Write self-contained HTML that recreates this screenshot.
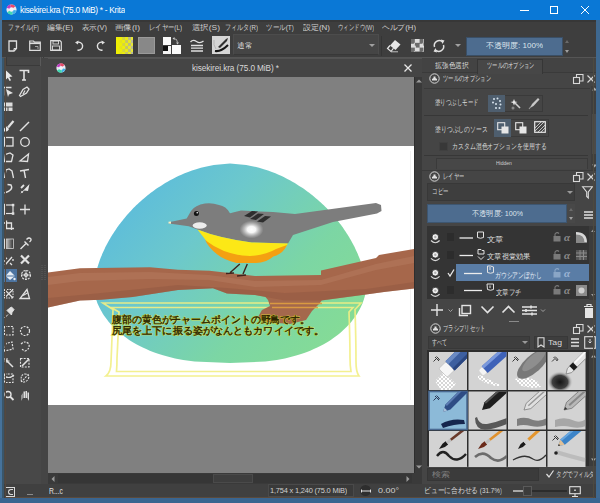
<!DOCTYPE html>
<html><head><meta charset="utf-8">
<style>
*{margin:0;padding:0;box-sizing:border-box}
html,body{width:600px;height:503px;overflow:hidden;background:#404040;font-family:"Liberation Sans",sans-serif;color:#d8d8d8;font-size:8px;line-height:1}
.a{position:absolute}
.t{position:absolute;white-space:nowrap;overflow:hidden;line-height:1}
svg{position:absolute;overflow:visible}
#title{left:0;top:0;width:600px;height:20px;background:#0a78d6;color:#fff}
#menu{left:0;top:20px;width:600px;height:16px;background:#3e3e3e;border-top:2px solid #373737}
#menu .t{top:2px;font-size:8px;color:#d0d0d0}
#toolbar{left:0;top:36px;width:600px;height:22px;background:#3e3e3e;border-bottom:1px solid #555}
#toolbox{left:2px;top:58px;width:46px;height:426px;background:#484848}
#tabbar{left:48px;top:58px;width:374px;height:19px;background:#454545;border-top:1px solid #535353}
#canvas{left:48px;top:77px;width:366px;height:396px;background:#808080;overflow:hidden}
#vscroll{left:414px;top:77px;width:8px;height:396px;background:#3a3a3a;border-left:1px solid #2e2e2e}
#hscroll{left:48px;top:473px;width:374px;height:11px;background:#3a3a3a}
#status{left:2px;top:484px;width:595px;height:13px;background:#404040}
#right{left:422px;top:58px;width:175px;height:426px;background:#454545}
#bl{left:0;top:0;width:2px;height:503px;background:#46729a}
#br{left:596px;top:20px;width:4px;height:483px;background:#3e6890}
#bb{left:0;top:498px;width:600px;height:5px;background:#3a6590}
</style></head><body>
<!-- title bar -->
<div class="a" id="title">
  <svg style="left:6px;top:4px" width="11" height="11" viewBox="0 0 10 10">
    <circle cx="5" cy="5" r="4.6" fill="#e8e8f0"/>
    <path d="M5 5L0.6 3.5A4.6 4.6 0 0 1 4 0.5Z" fill="#c03cc0"/>
    <path d="M5 5L4 0.5A4.6 4.6 0 0 1 8.5 2Z" fill="#e84a6a"/>
    <path d="M5 5L9.5 6A4.6 4.6 0 0 1 6 9.5Z" fill="#40b0e8"/>
    <path d="M5 5L6 9.5A4.6 4.6 0 0 1 1 7.5Z" fill="#40d8b0"/>
    <circle cx="5" cy="5" r="2" fill="#f4f4f8"/>
  </svg>
  <div class="t" style="left:20px;top:6px;font-size:9px;color:#fff;letter-spacing:-0.35px;transform-origin:0 0;transform:scaleX(0.882);--w:105px">kisekirei.kra (75.0 MiB) * - Krita</div>
  <div class="a" style="left:520px;top:10px;width:9px;height:1px;background:#fff"></div>
  <div class="a" style="left:550px;top:6px;width:8px;height:8px;border:1px solid #fff"></div>
  <svg style="left:581px;top:6px" width="8" height="8" viewBox="0 0 8 8"><path d="M0 0L8 8M8 0L0 8" stroke="#fff" stroke-width="1"/></svg>
</div>
<!-- menu -->
<div class="a" id="menu">
  <div class="t" style="left:8px;transform-origin:0 0;transform:scaleX(0.886);--w:31px">ファイル(F)</div>
  <div class="t" style="left:47px;transform-origin:0 0;transform:scaleX(1.130);--w:26px">編集(E)</div>
  <div class="t" style="left:82px;transform-origin:0 0;transform:scaleX(1.087);--w:25px">表示(V)</div>
  <div class="t" style="left:115px;transform-origin:0 0;transform:scaleX(1.250);--w:25px">画像(I)</div>
  <div class="t" style="left:149px;transform-origin:0 0;transform:scaleX(0.971);--w:33px">レイヤー(L)</div>
  <div class="t" style="left:192px;transform-origin:0 0;transform:scaleX(1.217);--w:28px">選択(S)</div>
  <div class="t" style="left:225px;transform-origin:0 0;transform:scaleX(0.917);--w:33px">フィルタ(R)</div>
  <div class="t" style="left:266px;transform-origin:0 0;transform:scaleX(0.966);--w:28px">ツール(T)</div>
  <div class="t" style="left:303px;transform-origin:0 0;transform:scaleX(1.125);--w:27px">設定(N)</div>
  <div class="t" style="left:338px;transform-origin:0 0;transform:scaleX(0.818);--w:36px">ウィンドウ(W)</div>
  <div class="t" style="left:382px;transform-origin:0 0;transform:scaleX(1.133);--w:34px">ヘルプ(H)</div>
</div>
<!-- toolbar -->
<div class="a" id="toolbar">
  <!-- new -->
  <svg style="left:8px;top:4px" width="10" height="12" viewBox="0 0 10 12"><path d="M1 1H8.5V8.5L6 11H1Z" fill="none" stroke="#e0e0e0" stroke-width="1.3"/><path d="M8.5 8.5H6V11" fill="none" stroke="#e0e0e0" stroke-width="1"/></svg>
  <!-- folder -->
  <svg style="left:29px;top:4px" width="12" height="11" viewBox="0 0 12 11"><path d="M0.7 1H4.5L5.5 2.2H11.3V10.3H0.7Z" fill="none" stroke="#dcdcdc" stroke-width="1.2"/><rect x="0.7" y="2.5" width="10.6" height="1.6" fill="#dcdcdc"/><path d="M6 6.5H9V9" fill="none" stroke="#bbb" stroke-width="0.8"/></svg>
  <!-- save -->
  <svg style="left:50px;top:4px" width="12" height="11" viewBox="0 0 12 11"><path d="M0.7 0.7H10L11.3 2V10.3H0.7Z" fill="none" stroke="#dcdcdc" stroke-width="1.2"/><rect x="3" y="1" width="5.5" height="3" fill="none" stroke="#dcdcdc" stroke-width="0.9"/><rect x="2.5" y="6" width="7" height="4" fill="none" stroke="#dcdcdc" stroke-width="0.9"/></svg>
  <!-- undo -->
  <svg style="left:74px;top:4px" width="11" height="12" viewBox="0 0 11 12"><path d="M3 2.5A4 4 0 1 1 3.5 10" fill="none" stroke="#e0e0e0" stroke-width="1.4"/><path d="M1 2.5L4.5 0.5L4 4.5Z" fill="#e0e0e0"/></svg>
  <!-- redo -->
  <svg style="left:95px;top:4px" width="11" height="12" viewBox="0 0 11 12"><path d="M8 2.5A4 4 0 1 0 7.5 10" fill="none" stroke="#e0e0e0" stroke-width="1.4"/><path d="M10 2.5L6.5 0.5L7 4.5Z" fill="#e0e0e0"/></svg>
  <!-- yellow gradient -->
  <div class="a" style="left:116px;top:1px;width:17px;height:17px;background:repeating-conic-gradient(#e8e820 0 25%,#b0b098 0 50%) 0 0/6px 6px"></div>
  <div class="a" style="left:116px;top:1px;width:17px;height:17px;background:linear-gradient(90deg,#f2f200 0%,rgba(240,240,0,0.85) 25%,rgba(240,240,0,0.25) 70%,rgba(220,220,180,0.2) 100%)"></div>
  <!-- gray -->
  <div class="a" style="left:138px;top:1px;width:17px;height:17px;background:#888;border:1px solid #9a9a9a"></div>
  <!-- bw -->
  <div class="a" style="left:163px;top:1px;width:8px;height:8px;background:#fafafa"></div>
  <div class="a" style="left:163px;top:10px;width:8px;height:8px;background:#f4f4f4"></div><div class="a" style="left:163px;top:10px;width:5px;height:5px;background:#101010"></div>
  <div class="a" style="left:172px;top:9px;width:9px;height:9px;background:#fafafa"></div>
  <svg style="left:172px;top:1px" width="7" height="8" viewBox="0 0 7 8"><path d="M1.5 1.5Q5.5 1.5 5.5 5.5" fill="none" stroke="#c8c8c8" stroke-width="0.8"/><path d="M0.5 1.5L2.5 0V3Z M4 5.5H7L5.5 7.5Z" fill="#c8c8c8"/></svg>
  <!-- lines -->
  <svg style="left:190px;top:3px" width="14" height="14" viewBox="0 0 14 14"><path d="M0.5 3Q3 0 6.5 2.5T13.5 2" fill="none" stroke="#e0e0e0" stroke-width="1.3"/><path d="M1 6.5H13M1 9.2H13M1 12H13" stroke="#e0e0e0" stroke-width="1.3"/></svg>
  <!-- brush preset -->
  <div class="a" style="left:212px;top:0px;width:18px;height:18px;background:#d6d6d6"></div>
  <svg style="left:212px;top:0px" width="18" height="18" viewBox="0 0 18 18"><path d="M3 15Q9 16 16 9" fill="none" stroke="#151515" stroke-width="2"/><path d="M6 11L14 3L16 2L15 5L8 12Z" fill="#303030"/><path d="M2 4Q1 9 4 13" fill="none" stroke="#aaa" stroke-width="0.8"/></svg>
  <!-- combo -->
  <div class="a" style="left:233px;top:-2px;width:146px;height:21px;background:#454545;border:1px solid #4c4c4c;border-bottom-color:#383838"></div>
  <div class="t" style="left:237px;top:6px;font-size:8px;color:#dcdcdc;transform-origin:0 0;transform:scaleX(1.250);--w:15px">通常</div>
  <svg style="left:369px;top:8px" width="6" height="4" viewBox="0 0 6 4"><path d="M0 0H6L3 3Z" fill="#a0a0a0"/></svg>
  <div class="a" style="left:381px;top:0;width:1px;height:20px;background:#353535"></div>
  <!-- eraser -->
  <svg style="left:386px;top:3px" width="16" height="14" viewBox="0 0 16 14"><path d="M9 1L14.5 5.5L9.5 11L4 6.5Z" fill="#e6e6e6"/><path d="M4 6.5L1.5 9.5L5 12.5L7.5 9.2" fill="none" stroke="#e6e6e6" stroke-width="1.2"/><path d="M5 12.8H12" stroke="#cfcfcf" stroke-width="0.9"/></svg>
  <!-- pattern -->
  <div class="a" style="left:411px;top:3px;width:13px;height:13px;background:repeating-conic-gradient(#f0f0f0 0 25%,#707070 0 50%) 0 0/8.6px 8.6px;opacity:.9"></div>
  <!-- reload -->
  <svg style="left:432px;top:3px" width="14" height="14" viewBox="0 0 14 14"><path d="M2.5 8A5 5 0 0 1 10.5 2.8" fill="none" stroke="#e0e0e0" stroke-width="1.5"/><path d="M11.5 6A5 5 0 0 1 3.5 11.2" fill="none" stroke="#e0e0e0" stroke-width="1.5"/><path d="M9 0.5L12.5 1.5L10.5 5Z M5 13.5L1.5 12.5L3.5 9Z" fill="#e0e0e0"/></svg>
  <svg style="left:455px;top:8px" width="6" height="4" viewBox="0 0 6 4"><path d="M0 0H6L3 3Z" fill="#a0a0a0"/></svg>
  <!-- opacity slider -->
  <div class="a" style="left:466px;top:1px;width:97px;height:19px;background:#4d6c8f;border:1px solid #3a4f66"></div>
  <div class="t" style="left:486px;top:6px;font-size:8px;color:#dde4ec;transform-origin:0 0;transform:scaleX(1.213);--w:57px">不透明度: 100%</div>
  <svg style="left:564px;top:2px" width="6" height="17" viewBox="0 0 6 17"><path d="M1 5L3 2L5 5Z" fill="#6a6a6a"/><path d="M1 12H5L3 15Z" fill="#a0a0a0"/></svg>
</div>
<div class="a" id="toolbox">
  <div class="a" style="left:4px;top:-1px;width:38px;height:9px;border:1px solid #3a3a3a;border-top:none;background:#464646"></div>
  <div class="a" style="left:38px;top:-1px;width:1px;height:9px;background:#5a5a5a"></div><div class="a" style="left:40px;top:-1px;width:1px;height:9px;background:#5a5a5a"></div>
  <div class="a" style="left:39px;top:0;width:7px;height:426px;background:#454545"></div>
  <svg style="left:-1.5px;top:0" width="40" height="410" viewBox="0 0 40 410" fill="none" stroke="#e2e2e2" stroke-width="1.2">
    <!-- row1 y~75 => local 17 -->
    <path d="M4.5 12V22L6.8 19.8L8.6 23L10 22.3L8.3 19L11.5 18.6Z" fill="#e8e8e8" stroke="none"/>
    <path d="M18.5 12.5H27.5V15M23 12.5V22M21 22H25" stroke-width="1.6"/>
    <!-- row2 y~91 => 33 -->
    <path d="M2.5 37.5V29.5H10.5" stroke-width="1.4"/><path d="M5 31L12 35L8 36.5L7 39Z" fill="#e2e2e2" stroke="none"/>
    <path d="M18.5 37.5L22 31.5L26 29L28 31L25.5 35L19.5 38.5Z" stroke-width="1.3"/><path d="M22 36L24 32.5"/>
    <!-- row3 y~107 => 49 -->
    <rect x="2.5" y="44.5" width="9" height="4" fill="#dcdcdc" stroke="none"/><rect x="2.5" y="49.5" width="4" height="3.5" fill="#dcdcdc" stroke="none"/><rect x="7.5" y="49.5" width="4" height="3.5" fill="#dcdcdc" stroke="none"/>
    <!-- row4 brush/line y~126 => 68 -->
    <path d="M2.5 73.5Q2.5 69.5 5.5 68.5L8 71Q7 74 2.5 73.5Z" fill="#e8e8e8" stroke="none"/><path d="M7 69.5L12.5 63" stroke-width="2.2"/>
    <path d="M19 73L28 64" stroke-width="1.4"/>
    <!-- row5 rect/ellipse y~142 => 84 -->
    <rect x="3.5" y="79.5" width="8.5" height="8.5" stroke-width="1.3"/>
    <circle cx="24" cy="84" r="4.3" stroke-width="1.3"/>
    <!-- row6 polygon / polyline y~157 => 99 -->
    <path d="M3.5 103.5L4.5 96.5L9 95L12 97L10.5 103.5Z" stroke-width="1.3"/>
    <path d="M19 103L27.5 96L26.5 103.5Z" stroke-width="1.3"/>
    <!-- row7 bezier y~173 => 115 -->
    <path d="M3.5 120L5 112L8 111L11 113L12.5 120" stroke-width="1.3"/>
    <path d="M19 113L28 111.5M23 112L24.5 120" stroke-width="1.4"/>
    <!-- row8 freehand path y~189 => 131 -->
    <path d="M3.5 135Q13 132 10 127L6.5 126.5" stroke-width="1.4"/>
    <path d="M19 136L28.5 126L27 133L23.5 132.5Z" fill="#e6e6e6" stroke="none"/><path d="M20 130L23 127" stroke-width="1.8"/><circle cx="21" cy="134" r="1" fill="#e0e0e0" stroke="none"/>
    <!-- row9 transform/move y~209 => 151 -->
    <rect x="3.5" y="147" width="8.5" height="8.5" stroke-width="1.2"/><rect x="2.2" y="145.8" width="2.5" height="2.5" fill="#e0e0e0" stroke="none"/><rect x="10.8" y="145.8" width="2.5" height="2.5" fill="#e0e0e0" stroke="none"/><rect x="2.2" y="154.3" width="2.5" height="2.5" fill="#e0e0e0" stroke="none"/><rect x="10.8" y="154.3" width="2.5" height="2.5" fill="#e0e0e0" stroke="none"/>
    <path d="M24 146.5V156.5M19 151.5H29" stroke-width="1.3"/>
    <!-- row10 crop y~225 => 167 -->
    <path d="M5.5 162.5V170.5H13M3 165H10.5V172" stroke-width="1.3"/>
    <!-- row11 gradient / picker y~244 => 186 -->
    <rect x="3" y="181" width="9.5" height="9.5" fill="url(#gr)" stroke="#d0d0d0" stroke-width="0.8"/>
    <path d="M19.5 191L25 185.5M23.5 183.5L27.5 187.5M25.5 181.5Q28 179 29.5 180.5T28.5 184" stroke-width="1.4"/>
    <!-- row12 smart patch / multibrush y~260 => 202 -->
    <path d="M4 207L11 199M4.5 199.5L6 201M9 205L11 207" stroke-width="1.3"/><circle cx="4" cy="203" r="0.9" fill="#e0e0e0" stroke="none"/><circle cx="12" cy="202" r="0.9" fill="#e0e0e0" stroke="none"/>
    <path d="M20 197.5L28 205.5M28 197.5L20 205.5" stroke-width="2.2"/>
    <!-- row14 assistant y~294 => 236 -->
    <rect x="3.5" y="231.5" width="8.5" height="8.5" stroke-width="1" stroke-dasharray="1.5 1"/><path d="M3.5 231.5L12 240M12 231.5L3.5 240" stroke-width="1.2"/>
    <path d="M19 240.5H28.5L26 231.5Z" stroke-width="1.3"/><path d="M22 237.5L26.5 235"/>
    <!-- row15 pin y~312 => 254 -->
    <path d="M3.5 260L7 256.5M6 252.5L10.5 257L11 254.5L13 251.5L10.5 249L7.5 251Z" fill="#e0e0e0" stroke-width="1"/>
    <!-- row16 rect sel / ellipse sel y~331 => 273 -->
    <rect x="3.5" y="268.5" width="8.5" height="8.5" stroke-width="1.2" stroke-dasharray="2 1.2"/>
    <circle cx="24" cy="273" r="4.5" stroke-width="1.2" stroke-dasharray="2 1.2"/>
    <!-- row17 polygon sel / freehand sel y~347 => 289 -->
    <path d="M3.5 293L5 285.5L11 284L12 291Z" stroke-width="1.2" stroke-dasharray="2 1.2"/>
    <path d="M20 286Q24 282 28 286Q29 291 24 293L20.5 291" stroke-width="1.2" stroke-dasharray="2 1.2"/>
    <!-- row18 wand / similar y~363 => 305 -->
    <path d="M3.5 300.5L12 309" stroke-width="1.5"/><path d="M6 300V305M3.5 303H8.5" stroke-width="1"/>
    <rect x="19.5" y="300.5" width="8.5" height="8.5" stroke-width="1.1" stroke-dasharray="2 1.2"/><path d="M21 308L28 301" stroke-width="1.6"/>
    <!-- row19 bezier sel / magnetic y~378 => 320 -->
    <rect x="3.5" y="316" width="8.5" height="8.5" stroke-width="1.1" stroke-dasharray="2 1.2"/><path d="M2.5 317Q7.5 322 13 317" stroke-width="1.1"/>
    <path d="M20.5 324Q19 316 24 316Q29 316 27.5 320.5Q26 324 21 324.5M27.5 316L20.5 324" stroke-width="1.1" stroke-dasharray="2 1.1"/>
    <!-- row20 zoom / pan y~397 => 339 -->
    <circle cx="7" cy="336.5" r="3" stroke-width="1.4"/><path d="M9 338.5L12.5 342" stroke-width="1.8"/>
    <path d="M20.5 343V337.5L21.5 335V340M22.5 340V333.5H24V340M24.5 340V333H26V340M26.5 340V334.5H28V340V343Z" fill="#e0e0e0" stroke="none"/>
    <defs><linearGradient id="gr" x1="0" x2="1"><stop offset="0" stop-color="#f0f0f0"/><stop offset="1" stop-color="#303030"/></linearGradient></defs>
  </svg>
  <svg style="left:38px;top:206px" width="8" height="18" viewBox="0 0 8 18"><path d="M2 1V16M5 1V16" stroke="#5e5e5e" stroke-width="1" stroke-dasharray="1 1"/></svg>
  <!-- selected fill tool -->
  <div class="a" style="left:1px;top:211px;width:14px;height:13px;background:#4d74a0"></div>
  <svg style="left:0.5px;top:211px" width="14" height="13" viewBox="0 0 14 13"><path d="M7 2L12 7L7 11L2.5 7Z" fill="#e8eef5"/><path d="M2 7H12" stroke="#4d74a0" stroke-width="1"/><circle cx="11.5" cy="10" r="1.2" fill="#e8eef5"/></svg>
  <!-- paint-fill row col2: ruler/measure icon -->
  <svg style="left:16.5px;top:210px" width="14" height="14" viewBox="0 0 14 14" fill="none" stroke="#e2e2e2" stroke-width="1.1"><circle cx="7" cy="7" r="4.5" stroke-dasharray="2 1"/><path d="M2 7H12M7 2V12" stroke-width="0.9"/><circle cx="7" cy="7" r="1.5"/></svg>
</div>
<div class="a" id="tabbar">
  <svg style="left:8px;top:4px" width="10" height="10" viewBox="0 0 10 10">
    <circle cx="5" cy="5" r="4.6" fill="#e8e8f0"/>
    <path d="M5 5L0.6 3.5A4.6 4.6 0 0 1 4 0.5Z" fill="#c03cc0"/>
    <path d="M5 5L4 0.5A4.6 4.6 0 0 1 8.5 2Z" fill="#e84a6a"/>
    <path d="M5 5L9.5 6A4.6 4.6 0 0 1 6 9.5Z" fill="#40b0e8"/>
    <path d="M5 5L6 9.5A4.6 4.6 0 0 1 1 7.5Z" fill="#40d8b0"/>
    <circle cx="5" cy="5" r="2" fill="#f4f4f8"/>
  </svg>
  <div class="t" style="left:144px;top:5px;font-size:8.5px;color:#d8d8d8;letter-spacing:-0.1px;transform-origin:0 0;transform:scaleX(0.866);--w:87px">kisekirei.kra (75.0 MiB) *</div>
  <svg style="left:356px;top:5px" width="8" height="8" viewBox="0 0 8 8"><path d="M0.5 0.5L7.5 7.5M7.5 0.5L0.5 7.5" stroke="#e8e8e8" stroke-width="1.3"/></svg>
</div>
<div class="a" id="canvas">
  <svg style="left:0;top:0" width="366" height="396" viewBox="48 77 366 396">
    <defs>
      <linearGradient id="dome" x1="0.02" y1="0.2" x2="0.98" y2="0.85">
        <stop offset="0" stop-color="#5abade"/>
        <stop offset="0.33" stop-color="#6cc8cc"/>
        <stop offset="0.68" stop-color="#7cd6a4"/>
        <stop offset="1" stop-color="#86dc94"/>
      </linearGradient>
      <radialGradient id="spot"><stop offset="0" stop-color="#fff"/><stop offset="0.35" stop-color="#f6f6f6"/><stop offset="1" stop-color="#d0d0d0" stop-opacity="0"/></radialGradient>
    </defs>
    <rect x="48" y="146" width="366" height="259" fill="#fff"/>
    <path d="M410.5 151V400" stroke="#f2f2f2" stroke-width="1"/>
    <path d="M230.0 163.6 213.8 165.0 206.6 166.4 200.9 167.8 196.2 169.2 192.0 170.6 188.1 171.9 184.6 173.3 181.4 174.7 178.3 176.1 175.4 177.5 172.7 178.9 170.1 180.3 167.6 181.7 165.2 183.1 163.0 184.5 160.8 185.9 158.6 187.3 156.6 188.6 154.6 190.0 152.7 191.4 150.8 192.8 149.0 194.2 147.3 195.6 145.6 197.0 143.9 198.4 142.3 199.8 140.7 201.2 139.2 202.6 137.7 204.0 136.2 205.3 134.8 206.7 133.4 208.1 132.1 209.5 130.8 210.9 129.5 212.3 128.2 213.7 127.0 215.1 125.8 216.5 124.6 217.9 123.5 219.3 122.4 220.7 121.3 222.0 120.2 223.4 119.1 224.8 118.1 226.2 117.1 227.6 116.2 229.0 115.2 230.4 114.3 231.8 113.4 233.2 112.5 234.6 111.6 236.0 110.8 237.3 110.0 238.7 109.2 240.1 108.4 241.5 107.6 242.9 106.9 244.3 106.1 245.7 105.4 247.1 104.8 248.5 104.1 249.9 103.5 251.3 102.8 252.7 102.2 254.0 101.7 255.4 101.1 256.8 100.5 258.2 100.0 259.6 99.5 261.0 99.0 262.4 98.6 263.8 98.1 265.2 97.7 266.6 97.3 268.0 96.9 269.4 96.5 270.7 96.2 272.1 95.8 273.5 95.5 274.9 95.3 276.3 95.0 277.7 94.8 279.1 94.6 280.5 94.4 281.9 94.2 283.3 94.1 284.7 94.0 286.1 94.0 287.4 94.1 289.0 94.2 290.5 94.4 292.1 94.6 293.6 95.0 295.2 95.3 296.7 95.8 298.2 96.2 299.8 96.8 301.3 97.3 302.9 98.0 304.4 98.7 305.9 99.4 307.5 100.2 309.0 101.0 310.6 101.9 312.1 102.8 313.7 103.8 315.2 104.9 316.7 106.0 318.3 107.2 319.8 108.4 321.4 109.7 322.9 111.1 324.5 112.5 326.0 114.0 327.5 115.6 329.1 117.2 330.6 119.0 332.2 120.8 333.7 122.7 335.2 124.8 336.8 126.9 338.3 129.2 339.9 131.6 341.4 134.1 343.0 136.8 344.5 139.7 346.0 142.8 347.6 146.2 349.1 149.8 350.7 153.7 352.2 158.1 353.7 163.0 355.3 168.5 356.8 175.1 358.4 183.2 359.9 194.6 361.5 230.0 363.0 230.0 363.0 265.4 361.5 276.8 359.9 284.9 358.4 291.5 356.8 297.0 355.3 301.9 353.7 306.3 352.2 310.2 350.7 313.8 349.1 317.2 347.6 320.3 346.0 323.2 344.5 325.9 343.0 328.4 341.4 330.8 339.9 333.1 338.3 335.2 336.8 337.3 335.2 339.2 333.7 341.0 332.2 342.8 330.6 344.4 329.1 346.0 327.5 347.5 326.0 348.9 324.5 350.3 322.9 351.6 321.4 352.8 319.8 354.0 318.3 355.1 316.7 356.2 315.2 357.2 313.7 358.1 312.1 359.0 310.6 359.8 309.0 360.6 307.5 361.3 305.9 362.0 304.4 362.7 302.9 363.2 301.3 363.8 299.8 364.2 298.2 364.7 296.7 365.0 295.2 365.4 293.6 365.6 292.1 365.8 290.5 365.9 289.0 366.0 287.4 366.0 286.1 365.9 284.7 365.8 283.3 365.6 281.9 365.4 280.5 365.2 279.1 365.0 277.7 364.7 276.3 364.5 274.9 364.2 273.5 363.8 272.1 363.5 270.7 363.1 269.4 362.7 268.0 362.3 266.6 361.9 265.2 361.4 263.8 361.0 262.4 360.5 261.0 360.0 259.6 359.5 258.2 358.9 256.8 358.3 255.4 357.8 254.0 357.2 252.7 356.5 251.3 355.9 249.9 355.2 248.5 354.6 247.1 353.9 245.7 353.1 244.3 352.4 242.9 351.6 241.5 350.8 240.1 350.0 238.7 349.2 237.3 348.4 236.0 347.5 234.6 346.6 233.2 345.7 231.8 344.8 230.4 343.8 229.0 342.9 227.6 341.9 226.2 340.9 224.8 339.8 223.4 338.7 222.0 337.6 220.7 336.5 219.3 335.4 217.9 334.2 216.5 333.0 215.1 331.8 213.7 330.5 212.3 329.2 210.9 327.9 209.5 326.6 208.1 325.2 206.7 323.8 205.3 322.3 204.0 320.8 202.6 319.3 201.2 317.7 199.8 316.1 198.4 314.4 197.0 312.7 195.6 311.0 194.2 309.2 192.8 307.3 191.4 305.4 190.0 303.4 188.6 301.4 187.3 299.2 185.9 297.0 184.5 294.8 183.1 292.4 181.7 289.9 180.3 287.3 178.9 284.6 177.5 281.7 176.1 278.6 174.7 275.4 173.3 271.9 171.9 268.0 170.6 263.8 169.2 259.1 167.8 253.4 166.4 246.2 165.0 230.0 163.6Z" fill="url(#dome)"/>
    <!-- frame -->
    <g fill="none" stroke="#f2ee84" stroke-width="1.7" stroke-opacity="0.9">
      <path d="M103 303H361L355 309.5Q356 340 356 362Q356 372 359 376H106Q111 372 111 362Q112 340 113 309.5Z"/>
      <path d="M111 307.5H353L349 312Q350 340 350 358Q350 366 351 371.5H116.5Q117 366 117 358Q118 340 119 312Z"/>
    </g>
    <!-- branch -->
    <path d="M262 293L326 293L320 303L312 311L306 320L290 324L266 322L258 317L262 310L270 306L268 300Z" fill="#a4684c"/>
    <path d="M48 272.5L80 268.3L150 267.3L178 269.7L209.5 270.8L255 276L321 275L321 270.5L376 258L379 255L414 249V288.5L384 292L366 294.5L321 300.5L285 300.5L255 295L227 293.5L213 288.3L178 290L132.5 297L101 299.8L80 300.5L48 307.5Z" fill="#a6674b"/>
    <path d="M48 277L80 273L150 272L209 275L255 281L321 280L376 264L414 256V263L376 270L321 285L255 287L209 280L150 279L80 281L48 285Z" fill="#b67c60" opacity="0.5"/>
    <path d="M48 298L101 293L178 285L227 288L285 293L366 289L414 282V288.5L384 292L366 294.5L321 300.5L285 300.5L255 295L227 293.5L213 288.3L178 290L132.5 297L101 299.8L80 300.5L48 307.5Z" fill="#8e5640" opacity="0.45"/>
    <path d="M270 303.5H322M272 307.5H318" stroke="#e0a040" stroke-width="1.4" opacity="0.9"/>
    <!-- bird -->
    <path d="M288 243.5L293 235L333 222L377 213.5L381.5 211L381 205L376 203L295 214L273 212L241 210.6L230 213.2Q226 206 219 205Q212 202.5 205 203.5Q195 205 191 211L186.7 218.6L168.9 222.2L168.9 223.5L188.8 226.2L197.5 229.4Q219 238 251.7 242.4Z" fill="#7d7d7d"/>
    <path d="M197.5 229.4Q219 238 251.7 242.4L288 243.5Q282 254 273.3 255.4Q266 262 256 262L236.5 262Q226 259 219 254.3Q210 248 208.3 243.5Z" fill="#fce816"/>
    <path d="M205 240Q214 247 224 251Q238 256 250 256Q266 255 276 249L287 245Q283 254 273.3 256.5Q266 263 256 263L236.5 263Q224 260 217 254.3Q209 248 205 240Z" fill="#f4a012"/>
    <circle cx="196.4" cy="213.6" r="2.5" fill="#111"/><circle cx="197.2" cy="212.8" r="0.8" fill="#fff"/>
    <ellipse cx="199.7" cy="225.5" rx="7" ry="3.3" fill="#ececec"/>
    <ellipse cx="251.5" cy="229.5" rx="12" ry="9" fill="url(#spot)"/>
    <path d="M244 216L252 211L258 211.5L250 217.5Z M250 219L258 213.5L264 214L256 220Z M257 221.5L265 216L271 216.5L263 222.5Z" fill="#2e2e2e"/>
    <path d="M168.5 221.8L171 221.6L171 223.8L168.5 223.6Z" fill="#f4f0c8"/>
    <!-- legs -->
    <path d="M239.8 264L230 272.8M247.3 264L243 274M226 273.5L234 273M237 276L246 275" stroke="#40231c" stroke-width="1.4" fill="none"/>
    <!-- text -->
    <g font-size="10" fill="none" stroke="#e4dc30" stroke-width="1.4" stroke-opacity="0.75" font-family="Liberation Sans">
      <text x="112" y="323" textLength="198" lengthAdjust="spacingAndGlyphs">腹部の黄色がチャームポイントの野鳥です。</text>
      <text x="112" y="334" textLength="212" lengthAdjust="spacingAndGlyphs">尻尾を上下に振る姿がなんともカワイイです。</text>
    </g>
    <g font-size="10" fill="#2a2400" stroke="#2a2400" stroke-width="0.35" font-family="Liberation Sans">
      <text x="112" y="323" textLength="198" lengthAdjust="spacingAndGlyphs">腹部の黄色がチャームポイントの野鳥です。</text>
      <text x="112" y="334" textLength="212" lengthAdjust="spacingAndGlyphs">尻尾を上下に振る姿がなんともカワイイです。</text>
    </g>
  </svg>
</div>
<div class="a" id="vscroll">
  <svg style="left:1px;top:388px" width="6" height="4" viewBox="0 0 6 4"><path d="M0 0.5L3 3.5L6 0.5Z" fill="#9a9a9a"/></svg>
  <svg style="left:1px;top:2px" width="6" height="4" viewBox="0 0 6 4"><path d="M0 3.5L3 0.5L6 3.5Z" fill="#9a9a9a"/></svg>
</div>
<div class="a" id="hscroll">
  <svg style="left:3px;top:3px" width="4" height="6" viewBox="0 0 4 6"><path d="M3.5 0L0.5 3L3.5 6Z" fill="#9a9a9a"/></svg>
  <div class="a" style="left:10px;top:1px;width:354px;height:9px;background:#363636"></div>
  <div class="a" style="left:165px;top:1px;width:40px;height:9px;background:#3e3e3e;border:1px solid #4a4a4a"></div>
  <svg style="left:358px;top:3px" width="4" height="6" viewBox="0 0 4 6"><path d="M0.5 0L3.5 3L0.5 6Z" fill="#9a9a9a"/></svg>
</div>
<div class="a" id="status">
  <div class="a" style="left:3px;top:3px;width:10px;height:10px;border:1px solid #d8d8d8"></div>
  <div class="a" style="left:6px;top:5px;width:5px;height:6px;border:1px solid #d8d8d8;border-right:none;border-radius:3px 0 0 3px"></div>
  <div class="a" style="left:25px;top:10px;width:6px;height:1px;background:#8a8a8a"></div>
  <div class="t" style="left:47px;top:3px;font-size:9px;color:#e0e0e0;transform-origin:0 0;transform:scaleX(0.667);--w:14px">R...c</div>
  <div class="a" style="left:266px;top:0px;width:86px;height:13px;background:#3a3a3a;border:1px solid #4a4a4a"></div>
  <div class="t" style="left:268px;top:3px;font-size:8px;color:#d0d0d0;letter-spacing:-0.2px;transform-origin:0 0;transform:scaleX(0.997);--w:77px">1,754 x 1,240 (75.0 MiB)</div>
  <div class="a" style="left:358px;top:1px;width:11px;height:11px;border-radius:6px;background:#2e2e2e"></div>
  <svg style="left:359px;top:5px" width="10" height="4" viewBox="0 0 10 4"><path d="M0.5 2H9.5M0.5 0.5V3.5M9.5 0.5V3.5" stroke="#e0e0e0" stroke-width="1"/></svg>
  <div class="t" style="left:376px;top:3px;font-size:8px;color:#d0d0d0;transform-origin:0 0;transform:scaleX(1.235);--w:21px">0.00°</div>
  <div class="t" style="left:422px;top:3px;font-size:7.5px;color:#d8d8d8;transform-origin:0 0;transform:scaleX(1.013);--w:78px">ビューに合わせる (31.7%)</div>
  <div class="a" style="left:511px;top:6px;width:54px;height:2px;background:#2c2c2c"></div>
  <div class="a" style="left:511px;top:6px;width:10px;height:2px;background:#a8a8a8"></div>
  <div class="a" style="left:521px;top:2px;width:9px;height:10px;background:#3c3c3c;border:1px solid #5a5a5a"></div>
  <svg style="left:567px;top:2px" width="12" height="11" viewBox="0 0 12 11"><rect x="0.7" y="0.7" width="10.6" height="7" fill="none" stroke="#e0e0e0" stroke-width="1.1"/><path d="M6 8V10M3 10.5H9" stroke="#e0e0e0" stroke-width="1.1"/><rect x="5" y="3.5" width="2" height="1.5" fill="#bbb"/></svg>
</div>
<div class="a" id="right">
  <!-- tabs (local coords: x-422, y-58) -->
  <div class="a" style="left:0;top:0;width:175px;height:15px;background:#434343;border-bottom:1px solid #3a3a3a"></div>
  <div class="a" style="left:55px;top:1px;width:66px;height:15px;background:#474747;border:1px solid #363636;border-bottom:none"></div>
  <div class="t" style="left:13px;top:4px;font-size:8px;color:#dcdcdc;transform-origin:0 0;transform:scaleX(1.133);--w:34px">拡張色選択</div>
  <div class="t" style="left:65px;top:4px;font-size:8px;color:#dcdcdc;transform-origin:0 0;transform:scaleX(0.880);--w:47.5px">ツールのオプション</div>
  <!-- docker title -->
  <svg style="left:7px;top:15px" width="11" height="11" viewBox="0 0 11 11"><circle cx="5.5" cy="5.5" r="4.7" fill="none" stroke="#d8d8d8" stroke-width="1"/><path d="M3 7.5H8V6L6.5 5V3.5H4.5V5L3 6Z" fill="#e0e0e0"/></svg>
  <div class="t" style="left:21px;top:17px;font-size:8px;color:#d8d8d8;transform-origin:0 0;transform:scaleX(0.889);--w:48px">ツールのオプション</div>
  <svg style="left:151px;top:16px" width="11" height="10" viewBox="0 0 11 10" fill="none" stroke="#d8d8d8" stroke-width="1.1"><rect x="0.5" y="3.5" width="6" height="6"/><path d="M3.5 3.5V0.5H10V7H6.5"/></svg>
  <svg style="left:165px;top:17px" width="8" height="8" viewBox="0 0 8 8"><path d="M0.5 0.5L7.5 7.5M7.5 0.5L0.5 7.5" stroke="#d8d8d8" stroke-width="1.1"/></svg>
  <!-- tool options box -->
  <div class="a" style="left:2px;top:30px;width:166px;height:82px;border-top:1px solid #3a3a3a"></div>
  <div class="t" style="left:13px;top:41px;font-size:8px;color:#dcdcdc;transform-origin:0 0;transform:scaleX(0.906);--w:43.5px">塗りつぶしモード</div>
  <div class="a" style="left:66px;top:37px;width:55px;height:17px;border:1px solid #3a3a3a"></div>
  <div class="a" style="left:66px;top:37px;width:17px;height:17px;background:#4e5e6e"></div>
  <svg style="left:69px;top:39px" width="12" height="13" viewBox="0 0 12 13" fill="#d8e4ee"><circle cx="3" cy="2" r="1"/><circle cx="6.5" cy="1.5" r="1"/><circle cx="9" cy="4" r="1"/><circle cx="2" cy="5.5" r="1"/><circle cx="9.5" cy="7.5" r="1"/><circle cx="5" cy="7" r="1"/><circle cx="8.5" cy="11" r="1"/><circle cx="5" cy="11" r="1"/></svg>
  <svg style="left:88px;top:40px" width="12" height="12" viewBox="0 0 12 12"><path d="M4 1L5 3.5L7.5 4L5 5L4 7.5L3 5L0.5 4L3 3.5Z" fill="#e8e8e8"/><path d="M5 5L10 10" stroke="#cfcfcf" stroke-width="1.6"/><circle cx="3" cy="10" r="1.5" fill="#888"/></svg>
  <svg style="left:106px;top:39px" width="12" height="13" viewBox="0 0 12 13"><path d="M2 11L4 7L10 1L11.5 2.5L5.5 9Z" fill="#c8c8c8"/><path d="M1 12L3 9.5" stroke="#999" stroke-width="1.2"/></svg>
  <div class="a" style="left:2px;top:57px;width:164px;height:1px;background:#373737"></div>
  <div class="t" style="left:13px;top:68px;font-size:8px;color:#dcdcdc;transform-origin:0 0;transform:scaleX(0.972);--w:52.5px">塗りつぶしのソース</div>
  <div class="a" style="left:72px;top:61px;width:55px;height:18px;border:1px solid #3a3a3a"></div>
  <div class="a" style="left:72px;top:61px;width:17px;height:18px;background:#4e5e6e"></div>
  <svg style="left:75px;top:64px" width="12" height="12" viewBox="0 0 12 12"><rect x="0.7" y="0.7" width="7" height="7" fill="none" stroke="#e6e6e6" stroke-width="1.1"/><rect x="4.5" y="4.5" width="7" height="7" fill="#e6e6e6"/></svg>
  <svg style="left:93px;top:64px" width="12" height="12" viewBox="0 0 12 12"><rect x="0.7" y="0.7" width="7" height="7" fill="none" stroke="#e6e6e6" stroke-width="1.1"/><rect x="4.5" y="4.5" width="7" height="7" fill="#e6e6e6"/></svg>
  <svg style="left:112px;top:63px" width="12" height="12" viewBox="0 0 12 12"><rect x="0.7" y="0.7" width="10.6" height="10.6" fill="none" stroke="#e6e6e6" stroke-width="1.2"/><path d="M1 7L7 1M1 10L10 1M4 11L11 4M7 11L11 7" stroke="#d0d0d0" stroke-width="0.9"/></svg>
  <div class="a" style="left:17px;top:84px;width:9px;height:9px;background:#383838;border:1px solid #404040"></div>
  <div class="t" style="left:30px;top:85px;font-size:8px;color:#d8d8d8;transform-origin:0 0;transform:scaleX(0.985);--w:94.6px">カスタム混色オプションを使用する</div>
  <div class="a" style="left:2px;top:97px;width:164px;height:1px;background:#373737"></div>
  <div class="a" style="left:14px;top:100px;width:152px;height:11px;border:1px solid #3a3a3a;border-bottom:none;background:#474747"></div>
  <div class="t" style="left:74px;top:103px;width:30px;font-size:5px;color:#cfcfcf">Hidden</div>
  <!-- scrollbar -->
  <div class="a" style="left:169px;top:28px;width:6px;height:85px;background:#3e3e3e"></div>
  <svg style="left:170px;top:29px" width="5" height="4" viewBox="0 0 5 4"><path d="M0 3.5L2.5 0.5L5 3.5Z" fill="#aaa"/></svg>
  <svg style="left:170px;top:106px" width="5" height="4" viewBox="0 0 5 4"><path d="M0 0.5L2.5 3.5L5 0.5Z" fill="#aaa"/></svg>
  <div class="a" style="left:170px;top:56px;width:4px;height:40px;background:#4a4a4a"></div>
  <!-- layers docker title -->
  <div class="a" style="left:0;top:112px;width:175px;height:1px;background:#3a3a3a"></div>
  <svg style="left:7px;top:113px" width="11" height="11" viewBox="0 0 11 11"><circle cx="5.5" cy="5.5" r="4.7" fill="none" stroke="#d8d8d8" stroke-width="1"/><path d="M3 7.5H8V6L6.5 5V3.5H4.5V5L3 6Z" fill="#e0e0e0"/></svg>
  <div class="t" style="left:21px;top:115px;font-size:8px;color:#d8d8d8;transform-origin:0 0;transform:scaleX(0.875);--w:21px">レイヤー</div>
  <svg style="left:151px;top:114px" width="11" height="10" viewBox="0 0 11 10" fill="none" stroke="#d8d8d8" stroke-width="1.1"><rect x="0.5" y="3.5" width="6" height="6"/><path d="M3.5 3.5V0.5H10V7H6.5"/></svg>
  <svg style="left:165px;top:115px" width="8" height="8" viewBox="0 0 8 8"><path d="M0.5 0.5L7.5 7.5M7.5 0.5L0.5 7.5" stroke="#d8d8d8" stroke-width="1.1"/></svg>
  <!-- composite combo -->
  <div class="a" style="left:5px;top:125px;width:148px;height:18px;background:#3e3e3e;border:1px solid #383838"></div>
  <div class="t" style="left:10px;top:130px;font-size:8px;color:#d8d8d8;transform-origin:0 0;transform:scaleX(0.917);--w:16.5px">コピー</div>
  <svg style="left:145px;top:133px" width="6" height="4" viewBox="0 0 6 4"><path d="M0 0H6L3 3Z" fill="#999"/></svg>
  <svg style="left:160px;top:128px" width="11" height="13" viewBox="0 0 11 13"><path d="M0.6 0.8H10.4L6.3 6V12L4.7 10.5V6Z" fill="none" stroke="#dcdcdc" stroke-width="1.1"/></svg>
  <!-- opacity slider -->
  <div class="a" style="left:5px;top:146px;width:140px;height:19px;background:#4d6c8f;border:1px solid #3e5670"></div>
  <div class="t" style="left:50px;top:152px;font-size:8px;color:#dde4ec;transform-origin:0 0;transform:scaleX(1.085);--w:51px">不透明度: 100%</div>
  <div class="a" style="left:145px;top:146px;width:8px;height:19px;background:#484848"></div><svg style="left:146px;top:148px" width="6" height="16" viewBox="0 0 6 16"><path d="M1 5L3 2L5 5Z" fill="#6a6a6a"/><path d="M1 11H5L3 14Z" fill="#a0a0a0"/></svg>
  <svg style="left:162px;top:153px" width="9" height="8" viewBox="0 0 9 8"><path d="M0 1H9M0 4H9M0 7H9" stroke="#e0e0e0" stroke-width="1.3"/></svg>
  <!-- layer list -->
  <div class="a" style="left:5px;top:168px;width:162px;height:73px;background:#343434"></div>
  <div class="a" style="left:34px;top:206px;width:133px;height:17px;background:#5a7da6"></div>
  <svg style="left:0;top:168px" width="175" height="74" viewBox="0 0 175 74">
    <defs><radialGradient id="eye" cx="0.45" cy="0.35" r="0.7"><stop offset="0" stop-color="#ffffff"/><stop offset="0.6" stop-color="#c8c8c8"/><stop offset="1" stop-color="#707070"/></radialGradient></defs>
    <g><circle cx="13.3" cy="11.0" r="3.3" fill="#f0f0f0" stroke="#2a2a2a" stroke-width="0.8"/><circle cx="13.3" cy="11.0" r="1.2" fill="#b0b0b0"/><path d="M9 14.5Q13.3 19.0 17.6 14.5" stroke="#d8d8d8" stroke-width="1.2" fill="none"/><circle cx="13.3" cy="28.8" r="3.3" fill="#f0f0f0" stroke="#2a2a2a" stroke-width="0.8"/><circle cx="13.3" cy="28.8" r="1.2" fill="#b0b0b0"/><path d="M9 32.3Q13.3 36.8 17.6 32.3" stroke="#d8d8d8" stroke-width="1.2" fill="none"/><circle cx="13.3" cy="46.8" r="3.3" fill="#f0f0f0" stroke="#2a2a2a" stroke-width="0.8"/><circle cx="13.3" cy="46.8" r="1.2" fill="#b0b0b0"/><path d="M9 50.3Q13.3 54.8 17.6 50.3" stroke="#d8d8d8" stroke-width="1.2" fill="none"/><circle cx="13.3" cy="64.6" r="3.3" fill="#f0f0f0" stroke="#2a2a2a" stroke-width="0.8"/><circle cx="13.3" cy="64.6" r="1.2" fill="#b0b0b0"/><path d="M9 68.1Q13.3 72.6 17.6 68.1" stroke="#d8d8d8" stroke-width="1.2" fill="none"/></g>
    <rect x="25" y="7" width="7" height="8" fill="#2c2c2c"/><rect x="25" y="25" width="7" height="8" fill="#2c2c2c"/><rect x="25" y="60" width="7" height="8" fill="#2c2c2c"/>
    <path d="M26 47L28 50L32 43.5" stroke="#e8e8e8" stroke-width="1.3" fill="none"/>
    <g stroke="#ececec" stroke-width="1.3">
      <path d="M37.5 12H51"/><path d="M37.5 29.5H51"/><path d="M42 47.5H60"/><path d="M42 64.5H60"/>
    </g>
    <g fill="none" stroke="#e2e2e2" stroke-width="1">
      <path d="M55.5 6V11.5Q58.5 13 61.5 11.5V6M55.5 6H61.5"/>
      <path d="M56 23.5H59L60 24.5H62V28H56Z"/><path d="M56 30.5L59 33.5L62 30.5"/>
      <path d="M65.5 40V46.5Q68.5 48 71.5 46.5V41L68.5 40Z"/><path d="M68 41V44"/>
      <path d="M65 58H71.5V63.5Q68.5 65 65.5 63.5Z"/><path d="M68 59.5V62"/>
    </g>
    <g fill="#7a7a7a">
      <path d="M131.5 10H138.5V15.5H131.5Z"/><path d="M133 10V8Q135 5.5 137 7.5" fill="none" stroke="#7a7a7a" stroke-width="1.1"/>
      <path d="M131.5 28H138.5V33.5H131.5Z"/><path d="M133 28V26Q135 23.5 137 25.5" fill="none" stroke="#7a7a7a" stroke-width="1.1"/>
      <path d="M131.5 63H138.5V68.5H131.5Z"/><path d="M133 63V61Q135 58.5 137 60.5" fill="none" stroke="#7a7a7a" stroke-width="1.1"/>
      <path d="M131.5 46H138.5V51.5H131.5Z" fill="#8aa6c6"/><path d="M133 46V44Q135 41.5 137 43.5" fill="none" stroke="#8aa6c6" stroke-width="1.1"/>
    </g>
    <g font-size="11" font-family="Liberation Serif" fill="#8a8a8a" font-style="italic" font-weight="bold">
      <text x="142" y="15">α</text><text x="142" y="33">α</text><text x="142" y="51" fill="#9ab4d4">α</text><text x="142" y="68">α</text>
    </g>
    <path d="M154 6Q165 6 165 16.5H154Z" fill="#d8d8d8"/><path d="M154 8.5Q162.5 8.5 162.5 16.5H154Z" fill="#888"/>
    <rect x="154" y="24" width="11" height="10" fill="#555"/><path d="M154 27H165M154 30.5H165M158 24V34M161.5 24V34" stroke="#8a8a8a" stroke-width="1"/>
    <rect x="154" y="59" width="11" height="11" fill="#8a8a8a"/><circle cx="159.5" cy="64.5" r="3" fill="#cfcfcf"/>
    <rect x="167" y="0" width="8" height="74" fill="#3c3c3c"/>
    <path d="M169 6L171 3.5L173 6Z M169 68L171 70.5L173 68Z" fill="#9a9a9a"/>
  </svg>
  <div class="t" style="left:65px;top:178px;font-size:8px;color:#e0e0e0;transform-origin:0 0;transform:scaleX(1.375);--w:16.5px">文章</div>
  <div class="t" style="left:65px;top:195px;font-size:8px;color:#e0e0e0;transform-origin:0 0;transform:scaleX(1.211);--w:43.6px">文章視覚効果</div>
  <div class="t" style="left:73px;top:214px;font-size:8px;color:#e8eef6;transform-origin:0 0;transform:scaleX(0.971);--w:46.6px">ガウシアンぼかし</div>
  <div class="t" style="left:74px;top:231px;font-size:8px;color:#e0e0e0;transform-origin:0 0;transform:scaleX(1.067);--w:25.6px">文章フチ</div>
  <!-- layer buttons (local y = page-58) -->
  <svg style="left:0;top:242px" width="175" height="30" viewBox="0 0 175 30" fill="none" stroke="#e4e4e4" stroke-width="1.4">
    <path d="M15 4V16M9 10H21"/>
    <path d="M26.5 9.5L28.5 11.5L30.5 9.5" stroke-width="0.9" stroke="#aaa"/>
    <path d="M37.5 8V15.5H46"/><rect x="40" y="5.5" width="8.5" height="8"/>
    <path d="M59.5 6.5L65.5 12.5L71.5 6.5" stroke-width="1.6"/>
    <path d="M80.5 12.5L86.5 6.5L92.5 12.5" stroke-width="1.6"/>
    <path d="M100 7H115M100 10.5H115M100 14H115" stroke-width="1.3"/><path d="M109 5.5V8.5M104 9V12M110 12.5V15.5" stroke-width="1.6"/>
    <path d="M119 9.5L121 11.5L123 9.5" stroke-width="0.9" stroke="#aaa"/>
    <path d="M162 6.5H172M165 6.5V4.5H169V6.5" stroke-width="1.2"/><path d="M163 8H171V18H163Z" fill="#e4e4e4" stroke="none"/>
    <path d="M87 21.5H97" stroke="#8a8a8a" stroke-width="1"/>
  </svg>
  <!-- brush presets title -->
  <svg style="left:8px;top:265px" width="11" height="11" viewBox="0 0 11 11"><circle cx="5.5" cy="5.5" r="4.7" fill="none" stroke="#d8d8d8" stroke-width="1"/><path d="M3 7.5H8V6L6.5 5V3.5H4.5V5L3 6Z" fill="#e0e0e0"/></svg>
  <div class="t" style="left:21px;top:267px;font-size:8px;color:#d8d8d8;transform-origin:0 0;transform:scaleX(0.888);--w:42.6px">ブラシプリセット</div>
  <svg style="left:151px;top:266px" width="11" height="10" viewBox="0 0 11 10" fill="none" stroke="#d8d8d8" stroke-width="1.1"><rect x="0.5" y="3.5" width="6" height="6"/><path d="M3.5 3.5V0.5H10V7H6.5"/></svg>
  <svg style="left:165px;top:267px" width="8" height="8" viewBox="0 0 8 8"><path d="M0.5 0.5L7.5 7.5M7.5 0.5L0.5 7.5" stroke="#d8d8d8" stroke-width="1.1"/></svg>
  <!-- preset combo -->
  <div class="a" style="left:6px;top:278px;width:102px;height:13px;background:#3e3e3e;border:1px solid #383838"></div>
  <div class="t" style="left:10px;top:281px;font-size:8px;color:#dcdcdc;transform-origin:0 0;transform:scaleX(0.833);--w:15px">すべて</div>
  <svg style="left:100px;top:283px" width="6" height="4" viewBox="0 0 6 4"><path d="M0 0H6L3 3Z" fill="#999"/></svg>
  <div class="a" style="left:112px;top:278px;width:34px;height:13px;background:#3e3e3e;border:1px solid #383838"></div>
  <svg style="left:115px;top:279px" width="8" height="11" viewBox="0 0 8 11"><path d="M1 0.7H7V10L4 8L1 10Z" fill="none" stroke="#dcdcdc" stroke-width="1.1"/></svg>
  <div class="t" style="left:126px;top:281px;font-size:8px;color:#d8d8d8;transform-origin:0 0;transform:scaleX(1.167);--w:14px">Tag</div>
  <svg style="left:149px;top:280px" width="8" height="9" viewBox="0 0 8 9"><path d="M0 1H8M0 4.5H8M0 8H8" stroke="#e0e0e0" stroke-width="1.4"/></svg>
  <svg style="left:162px;top:278px" width="12" height="13" viewBox="0 0 12 13"><rect x="0.7" y="0.7" width="10.6" height="11.6" fill="none" stroke="#dcdcdc" stroke-width="1.1"/><path d="M6 3V7M4.5 5.5L6 7L7.5 5.5" stroke="#dcdcdc" stroke-width="1"/></svg>
  <!-- brush grid -->
  <div class="a" style="left:5px;top:292px;width:162px;height:116px;background:#2e2e2e"></div>
  <svg style="left:7px;top:294px" width="158" height="114" viewBox="0 0 158 114">
    <defs>
      <linearGradient id="blu" x1="0" y1="0" x2="1" y2="1"><stop offset="0" stop-color="#6d8fd0"/><stop offset="1" stop-color="#2c4c90"/></linearGradient>
      <radialGradient id="blob"><stop offset="0" stop-color="#151515"/><stop offset="0.6" stop-color="#404040"/><stop offset="1" stop-color="#d4d4d4" stop-opacity="0"/></radialGradient>
      <clipPath id="cl00"><rect x="0" y="0" width="38" height="38"/></clipPath><clipPath id="cl01"><rect x="39.5" y="0" width="38" height="38"/></clipPath><clipPath id="cl02"><rect x="79" y="0" width="38" height="38"/></clipPath><clipPath id="cl03"><rect x="118.5" y="0" width="38" height="38"/></clipPath><clipPath id="cl10"><rect x="0" y="39.5" width="38" height="38"/></clipPath><clipPath id="cl11"><rect x="39.5" y="39.5" width="38" height="38"/></clipPath><clipPath id="cl12"><rect x="79" y="39.5" width="38" height="38"/></clipPath><clipPath id="cl13"><rect x="118.5" y="39.5" width="38" height="38"/></clipPath><clipPath id="cl20"><rect x="0" y="79" width="38" height="36"/></clipPath><clipPath id="cl21"><rect x="39.5" y="79" width="38" height="36"/></clipPath><clipPath id="cl22"><rect x="79" y="79" width="38" height="36"/></clipPath><clipPath id="cl23"><rect x="118.5" y="79" width="38" height="36"/></clipPath><pattern id="chk" width="4" height="4" patternUnits="userSpaceOnUse"><rect width="4" height="4" fill="#d6d6d6"/><rect width="2" height="2" fill="#fff"/><rect x="2" y="2" width="2" height="2" fill="#fff"/></pattern>
    </defs>
    <g fill="#d3d3d3">
      <rect x="0" y="0" width="38" height="38"/><rect x="39.5" y="0" width="38" height="38"/><rect x="79" y="0" width="38" height="38"/><rect x="118.5" y="0" width="38" height="38"/>
      <rect x="39.5" y="39.5" width="38" height="38"/><rect x="79" y="39.5" width="38" height="38"/><rect x="118.5" y="39.5" width="38" height="38"/>
      <rect x="0" y="79" width="38" height="36"/><rect x="39.5" y="79" width="38" height="36"/><rect x="79" y="79" width="38" height="36"/><rect x="118.5" y="79" width="38" height="36"/>
    </g>
    <rect x="0" y="39.5" width="38" height="38" fill="#8cbad8" stroke="#4a6a92" stroke-width="1.6"/>
    <!-- cell1 eraser -->
    <g clip-path="url(#cl00)">
    <g transform="translate(0,0)">
      <path d="M6 29L15 20L27 32L21 38H12Z" fill="url(#chk)"/>
      <g transform="translate(14,21) rotate(-45)"><rect x="0" y="-6" width="10" height="12" rx="1.5" fill="#f6f6f6" stroke="#b8b8b8" stroke-width="0.6"/><rect x="10" y="-6.5" width="30" height="13" fill="#3d5fa0"/><rect x="10" y="-6.5" width="30" height="4" fill="#6a8ac4"/><rect x="10" y="3.5" width="30" height="3" fill="#2a4680"/></g>
      <path d="M4.5 9.5L7 7M6 5L10 9M7.5 4.5L10.5 7.5L9 8.5" stroke="#3a3a3a" stroke-width="1" fill="none"/>
    </g></g>
    <!-- cell2 marker -->
    <g clip-path="url(#cl01)">
    <g>
      <path d="M49 24L53 23L57 27L62 28L66 31L70 32L71 34L66 34L61 32L56 31L52 28L49 27Z" fill="url(#chk)"/>
      <g transform="translate(52,21) rotate(-42)"><rect x="0" y="-3.5" width="5" height="7" rx="1.5" fill="#f4f4f4"/><rect x="5" y="-4.5" width="36" height="9" fill="#3f62b8"/><rect x="5" y="-4.5" width="36" height="3" fill="#7a98dc"/></g>
    </g></g>
    <!-- cell3 airbrush -->
    <g clip-path="url(#cl02)">
    <g>
      <path d="M86 27L96 24L108 29L112 35L104 36L92 34Z" fill="url(#chk)"/>
      <g transform="translate(104,12) rotate(-42)"><ellipse cx="0" cy="0" rx="20" ry="8.5" fill="#787878"/><ellipse cx="3" cy="-2" rx="15" ry="5" fill="#8e8e8e"/></g>
      <path d="M83.5 9.5L86 7M85 5L89 9M86.5 4.5L89.5 7.5L88 8.5" stroke="#3a3a3a" stroke-width="1" fill="none"/>
    </g></g>
    <!-- cell4 soft round -->
    <g clip-path="url(#cl03)">
    <g>
      <ellipse cx="131" cy="30" rx="13" ry="11" fill="url(#blob)"/>
      <g transform="translate(137,22) rotate(-45)"><path d="M0 0L5 -3H30V3H5Z" fill="#e6e6e6" stroke="#7a7a7a" stroke-width="0.7"/><rect x="8" y="-3.2" width="5" height="6.4" fill="#1a1a1a"/><rect x="14" y="-3" width="16" height="2" fill="#fafafa"/></g>
      <path d="M123 9.5L125.5 7M124.5 5L128.5 9M126 4.5L129 7.5L127.5 8.5" stroke="#3a3a3a" stroke-width="1" fill="none"/>
    </g></g>
    <!-- row2 cell1 pencil -->
    <g clip-path="url(#cl10)">
    <g>
      <path d="M12 72Q22 66 35 68L36 72Q25 72 14 76Z" fill="#16264e"/>
      <g transform="translate(14,60) rotate(-45)"><path d="M0 0L7 -3.5H32V3.5H7Z" fill="#2e4c84"/><path d="M0 0L4 -2V2Z" fill="#a8c0d8"/><rect x="7" y="-3.5" width="25" height="2" fill="#5a7ab0"/></g>
      <path d="M4.5 48.5L7 46M6 44L10 48M7.5 43.5L10.5 46.5L9 47.5" stroke="#2a3a5a" stroke-width="1" fill="none"/>
    </g></g>
    <!-- row2 cell2 black marker -->
    <g clip-path="url(#cl11)">
    <g>
      <path d="M48 65Q50 73 58 72Q68 70 78 66V72Q66 77 56 78Q46 77 46 66Z" fill="#3a3a3a" opacity="0.8"/>
      <g transform="translate(53,58) rotate(-42)"><path d="M0 0L7 -4H34V4H7Z" fill="#1e1e1e"/><rect x="7" y="-4" width="27" height="2" fill="#555"/></g>
    </g></g>
    <!-- row2 cell3 silver pen -->
    <g clip-path="url(#cl12)">
    <g>
      <path d="M88 67Q96 64 104 68Q112 70 118 66V73Q110 76 102 74Q94 72 88 74Z" fill="#5a5a5a" opacity="0.7"/>
      <g transform="translate(95,58) rotate(-42)"><path d="M0 0L6 -3.5H30V3.5H6Z" fill="#e0e0e0" stroke="#7a7a7a" stroke-width="0.7"/><rect x="6" y="-1" width="24" height="1.5" fill="#999"/></g>
    </g></g>
    <!-- row2 cell4 gray pencil -->
    <g clip-path="url(#cl13)">
    <g>
      <path d="M126 68Q136 64 146 69Q152 71 157 67V74Q150 77 142 75Q134 73 126 75Z" fill="#8a8a8a" opacity="0.6"/>
      <g transform="translate(135,58) rotate(-42)"><path d="M0 0L7 -4H32V4H7Z" fill="#b8b8b8" stroke="#707070" stroke-width="0.7"/><path d="M0 0L3 -1.5V1.5Z" fill="#333"/><rect x="7" y="-1" width="25" height="2" fill="#888"/></g>
    </g></g>
    <!-- row3 brushes -->
    <g clip-path="url(#cl20)"><path d="M8 104Q14 96 20 104Q28 112 37 102" stroke="#222" stroke-width="2.4" fill="none"/><g transform="translate(10,97) rotate(-38)"><path d="M0 0L6 -2H10V2H6Z" fill="#1a1a1a"/><rect x="10" y="-1.5" width="5" height="3" fill="#c0c0c0"/><rect x="15" y="-1.3" width="18" height="2.6" fill="#6a3a2a"/></g></g>
    <g clip-path="url(#cl21)"><path d="M46 105Q54 98 62 106Q70 112 78 104" stroke="#4a4a4a" stroke-width="2.6" fill="none" opacity="0.75"/><g transform="translate(49,97) rotate(-38)"><path d="M0 0L6 -2H10V2H6Z" fill="#6a2a1a"/><rect x="10" y="-1.5" width="5" height="3" fill="#c0c0c0"/><rect x="15" y="-1.3" width="18" height="2.6" fill="#e0902c"/></g></g>
    <g clip-path="url(#cl22)"><path d="M84 108Q96 101 104 107Q110 111 117 103" stroke="#333" stroke-width="1.3" fill="none"/><g transform="translate(89,97) rotate(-42)"><path d="M0 0L5 -1.8H9V1.8H5Z" fill="#1a1a1a"/><rect x="9" y="-1.5" width="5" height="3" fill="#d0d0d0"/><rect x="14" y="-1.5" width="20" height="3" fill="#e4962e"/></g></g>
    <g clip-path="url(#cl23)"><path d="M127 100Q140 104 156 108" stroke="#aaa" stroke-width="4" fill="none" opacity="0.55"/><circle cx="127" cy="101" r="1.8" fill="#222"/><g transform="translate(129,94) rotate(-40)"><path d="M0 0L6 -3.5H32V3.5H6Z" fill="#3c84c8"/><path d="M0 0L6 -3.5V3.5Z" fill="#e0c098"/><path d="M0 0L2 -1V1Z" fill="#222"/><rect x="6" y="-3.5" width="26" height="2" fill="#6aa8e0"/></g><path d="M123.5 88.5L126 86M125 84L129 88M126.5 83.5L129.5 86.5L128 87.5" stroke="#3a3a3a" stroke-width="1" fill="none"/></g>
  </svg>
  <div class="a" style="left:167px;top:292px;width:8px;height:116px;background:#3c3c3c"></div>
  <svg style="left:169px;top:296px" width="5" height="4" viewBox="0 0 5 4"><path d="M0 3.5L2.5 0.5L5 3.5Z" fill="#aaa"/></svg>
  <svg style="left:169px;top:400px" width="5" height="4" viewBox="0 0 5 4"><path d="M0 0.5L2.5 3.5L5 0.5Z" fill="#aaa"/></svg>
  <!-- search -->
  <div class="a" style="left:5px;top:410px;width:112px;height:13px;background:#3b3b3b;border:1px solid #363636"></div>
  <div class="t" style="left:10px;top:413px;font-size:8px;color:#808080;transform-origin:0 0;transform:scaleX(1.500);--w:18px">検索</div>
  <svg style="left:124px;top:412px" width="8" height="8" viewBox="0 0 8 8"><path d="M0.5 4L3 7L7.5 0.5" stroke="#e0e0e0" stroke-width="1.2" fill="none"/></svg>
  <div class="t" style="left:134px;top:413px;font-size:8px;color:#d8d8d8;transform-origin:0 0;transform:scaleX(0.929);--w:39px">タグでフィルタ</div>
</div>
<div class="a" id="bl"></div>
<div class="a" id="br"></div>
<div class="a" id="bb"></div>
<div class="a" style="left:5px;top:58px;width:1px;height:440px;background:#54483e"></div>
<div class="a" style="left:2px;top:58px;width:2px;height:440px;background:#3a566a"></div>
<div class="a" style="left:5px;top:497px;width:590px;height:1px;background:#5a4a3c"></div>
<div class="a" style="left:593px;top:58px;width:1px;height:440px;background:#4c4a40"></div>
<script>
(function(){var els=document.querySelectorAll('.t');for(var i=0;i<els.length;i++){var e=els[i];var w=parseFloat(getComputedStyle(e).getPropertyValue('--w'));if(!w)continue;e.style.transform='none';var r=document.createRange();r.selectNodeContents(e);var n=r.getBoundingClientRect().width;e.style.transform=n>0?'scaleX('+(w/n)+')':'';}})();
</script>
</body></html>
